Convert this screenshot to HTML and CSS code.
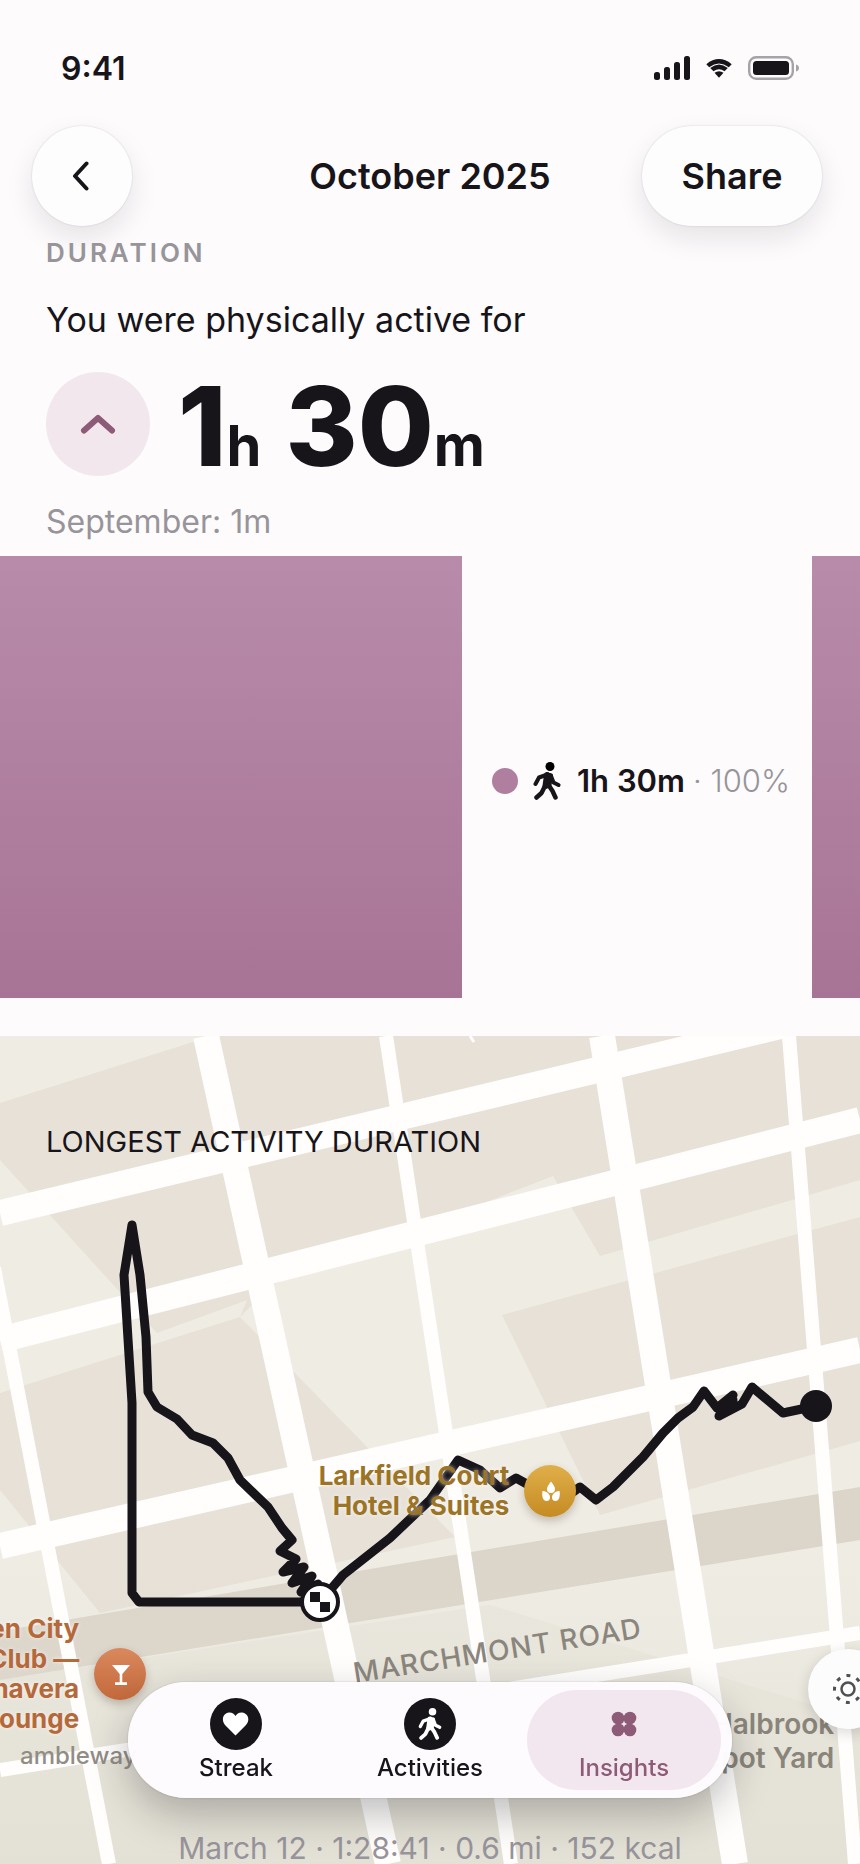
FILE: index.html
```html
<!DOCTYPE html>
<html lang="en">
<head>
<meta charset="utf-8">
<meta name="viewport" content="width=device-width, initial-scale=1">
<title>October 2025</title>
<link rel="stylesheet" href="styles.css">
</head>
<body>
<svg class="defs" aria-hidden="true">
  <symbol id="walker" viewBox="0 0 28 38">
    <circle cx="17" cy="4.500" r="4.500"/>
    <path d="M14 13 L12.500 24 M17 14 L15.500 23" stroke="currentColor" stroke-width="6" stroke-linecap="round" stroke-linejoin="round"/>
    <path d="M14.500 12.500 L6 15.500 L2.500 22 M18 14 L20.500 20.500 L25.500 23" fill="none" stroke="currentColor" stroke-width="4" stroke-linecap="round" stroke-linejoin="round"/>
    <path d="M12 24 L8.500 31 L3.500 35.500 M15.500 23 L19.500 29 L22.500 35.500" fill="none" stroke="currentColor" stroke-width="4.500" stroke-linecap="round" stroke-linejoin="round"/>
  </symbol>
</svg>
<main class="page">
  <div class="status">
    <time class="status-time">9:41</time>
    <div class="status-icons">
      <svg width="36" height="24" viewBox="0 0 36 24" aria-label="Signal"><rect y="16" width="6" height="8" rx="2.500"/><rect x="10" y="11" width="6" height="13" rx="2.500"/><rect x="20" y="6" width="6" height="18" rx="2.500"/><rect x="30" width="6" height="24" rx="2.500"/></svg>
      <svg width="26" height="19" viewBox="0 0 26 19" aria-label="Wi-Fi"><path d="M0.300 5.200 Q13 -5 25.700 5.200 L22.800 8.200 Q13 0.800 3.200 8.200Z"/><path d="M4.200 9 Q13 2 21.800 9 L18.500 12.300 Q13 8 7.500 12.300Z"/><path d="M8.500 13.700 Q13 10.700 17.500 13.700 L13 18.700Z"/></svg>
      <svg width="51" height="24" viewBox="0 0 51 24" aria-label="Battery"><rect x="1.200" y="1.200" width="43.600" height="21.600" rx="7" fill="none" stroke="#a5a3a7" stroke-width="2.400"/><rect x="5" y="5" width="36" height="14" rx="3.500"/><path d="M48 8.500 Q51 9.500 51 12 Q51 14.500 48 15.500Z" fill="#a5a3a7"/></svg>
    </div>
  </div>

  <header class="nav">
    <button class="glass back" aria-label="Back"><svg width="20" height="30" viewBox="0 0 20 30"><path d="M14.500 2.500 L3 15 L14.500 27.500" fill="none" stroke="#17141a" stroke-width="4" stroke-linecap="round" stroke-linejoin="round"/></svg></button>
    <h1 class="nav-title">October 2025</h1>
    <button class="glass share">Share</button>
  </header>

  <section class="summary">
    <h2 class="eyebrow">DURATION</h2>
    <p class="lead">You were physically active for</p>
    <div class="metric">
      <span class="trend"><svg width="36" height="22" viewBox="0 0 36 22" aria-label="Up"><path d="M4 17.500 L18 5 L32 17.500" fill="none" stroke="#8d5a77" stroke-width="6" stroke-linecap="round" stroke-linejoin="round"/></svg></span>
      <p class="value">1<span class="unit">h</span> 30<span class="unit">m</span></p>
    </div>
    <p class="previous">September: 1m</p>
  </section>

  <section class="chart" aria-label="Share by activity">
    <div class="bar"></div>
    <div class="legend">
      <span class="dot"></span>
      <svg class="walk" width="28" height="38" aria-label="Walking"><use href="#walker"/></svg>
      <strong class="legend-value">1h 30m</strong>
      <span class="legend-share">· 100%</span>
    </div>
    <div class="bar"></div>
  </section>

  <section class="map">
    <svg class="map-canvas" viewBox="0 1036 860 828" preserveAspectRatio="xMidYMin slice" aria-hidden="true">
      <defs><linearGradient id="fade" x1="0" y1="0" x2="0" y2="1"><stop offset="0" stop-color="#dfddd0" stop-opacity="0"/><stop offset="1" stop-color="#dfddd0" stop-opacity=".6"/></linearGradient></defs>
      <rect y="1036" width="860" height="828" fill="#e7e1d8"/>
      <g fill="#efece4">
        <path d="M0 1036 H212 L0 1103Z"/>
        <path d="M0 1160 L157 1333 L247 1300 L240 1317 L0 1393Z"/>
        <path d="M240 1317 L272 1285 L553 1176 L600 1256 L860 1180 V1217 L502 1315 L600 1515 L860 1441 V1864 H0 V1490 L100 1613 L455 1537Z"/>
      </g>
      <path d="M490 1605 L860 1720 V1864 H0 V1680Z" fill="#e5e1d8" opacity=".5"/>
      <path d="M0 1631 L860 1487 V1540 L0 1680Z" fill="#dcd5ca"/>
      <rect y="1560" width="860" height="304" fill="url(#fade)"/>
      <g stroke="#fffefd" stroke-width="26">
        <path d="M206 1036 L388 1864"/><path d="M602 1036 L735 1864"/>
        <path d="M0 1213 L860 1007"/><path d="M0 1340 L860 1120"/><path d="M0 1546 L860 1350"/>
      </g>
      <g stroke="#fffefd" stroke-width="14">
        <path d="M-6 1268 L109 1864"/><path d="M386 1036 L511 1864"/><path d="M789 1036 L855 1864"/><path d="M0 1770 L860 1633"/>
      </g>
      <path d="M470 1036 L474 1042" stroke="#fffefd" stroke-width="3"/>
      <g fill="none" stroke="#17141a" stroke-width="9" stroke-linecap="round" stroke-linejoin="round">
        <path d="M320 1602 H139 L132 1593 V1403 L124 1275 L132 1225 L140 1275 L146 1337 L148 1392 L157 1407 L177 1419 L192 1435 L213 1443 L228 1458 L240 1480 L268 1507 L282 1528 L292 1540 L280 1551 L296 1559 L283 1572 L304 1567 L292 1583 L312 1576 L301 1592 L318 1584"/>
        <path d="M320 1602 L343 1575 L390 1538 L430 1500 L458 1460 L480 1470 L500 1488 L516 1478 L534 1488 L573 1492 L580 1487 L596 1500 L613 1487 L643 1457 L663 1433 L678 1418 L693 1407 L704 1391 L717 1408 L733 1395 L719 1416 L742 1404 L752 1387 L783 1413 L816 1406"/>
        <path d="M721 1410 L733 1400"/>
      </g>
      <circle cx="816" cy="1406" r="16" fill="#17141a"/>
      <circle cx="320" cy="1602" r="18" fill="#fff" stroke="#17141a" stroke-width="4"/>
      <path d="M310 1592 h10 v20 h10 v-10 h-20z" fill="#17141a"/>
      <text class="road-name" transform="translate(355 1683) rotate(-9)">MARCHMONT ROAD</text>
    </svg>
    <h2 class="map-title">LONGEST ACTIVITY DURATION</h2>

    <div class="place hotel"><span class="place-name">Larkfield Court<br>Hotel &amp; Suites</span>
      <svg class="pin" width="52" height="52" viewBox="0 0 52 52" aria-hidden="true"><g fill="#fff"><path d="M27 16.500 C29.500 20 31 22 31 24 A4 4 0 0 1 23 24 C23 22 24.500 20 27 16.500Z"/><path d="M18.500 26 C22 26 26 28.500 26 32.500 C26 35 24.500 36 22.500 36 C19 36 17.500 31 18.500 26Z"/><path d="M35.500 26 C32 26 28 28.500 28 32.500 C28 35 29.500 36 31.500 36 C35 36 36.500 31 35.500 26Z"/></g></svg>
    </div>
    <div class="place lounge"><span class="place-name">Garden City<br>Club —<br>Primavera<br>Lounge</span>
      <svg class="pin" width="52" height="52" viewBox="0 0 52 52" aria-hidden="true"><path fill="#fff" d="M18 17 H36 L28.300 26 V34.300 H33 V37 H21 V34.300 H25.700 V26Z"/></svg>
    </div>
    <span class="street">ambleway</span>
    <span class="yard">Halbrook<br>Depot Yard</span>
    <button class="map-settings" aria-label="Map settings"><svg width="34" height="34" viewBox="0 0 34 34"><circle cx="17" cy="17" r="6.500" fill="none" stroke="#514f54" stroke-width="2.500"/><circle cx="17" cy="17" r="13.500" fill="none" stroke="#514f54" stroke-width="3" stroke-dasharray="4 6.603" stroke-dashoffset="2"/></svg></button>
    <p class="caption">March 12 · 1:28:41 · 0.6 mi · 152 kcal</p>
  </section>
</main>

<nav class="tabs" aria-label="Main">
  <a class="tab" href="#streak"><span class="tab-icon filled"><svg width="28" height="26" viewBox="0 0 28 26"><path fill="#fff" d="M13.500 24.500 L3 14 C-1 9 1 2 7 1.500 C10 1.300 12.500 3 13.500 5 C14.500 3 17 1.300 20 1.500 C26 2 28.500 9 24 14Z"/></svg></span>Streak</a>
  <a class="tab" href="#activities"><span class="tab-icon filled"><svg class="walk-light" width="24" height="32"><use href="#walker"/></svg></span>Activities</a>
  <a class="tab active" href="#insights" aria-current="page"><span class="tab-icon"><svg width="26" height="26" viewBox="0 0 26 26" fill="#8d5a77"><circle cx="7" cy="7" r="6.300"/><circle cx="19" cy="7" r="6.300"/><circle cx="7" cy="19" r="6.300"/><circle cx="19" cy="19" r="6.300"/><path fill-rule="evenodd" d="M8 8 H18 V18 H8Z M13 9.500 L12 12 L9.500 13 L12 14 L13 16.500 L14 14 L16.500 13 L14 12Z"/></svg></span>Insights</a>
</nav>
</body>
</html>
```

FILE: styles.css
```css
* { box-sizing: border-box; }
body {
  margin: 0;
  background: #fdfbfc;
  color: #17141a;
  font-family: Inter, "Liberation Sans", sans-serif;
}
h1, h2, p { margin: 0; }
button { border: 0; padding: 0; font: inherit; color: inherit; cursor: pointer; }
svg { display: block; }
.defs { position: absolute; width: 0; height: 0; }
.page { overflow: hidden; }

.status {
  display: flex;
  justify-content: space-between;
  align-items: center;
  padding: 48px 61px 0;
}
.status-time { padding-top: 2px; font-size: 32px; line-height: 38px; font-weight: 600; }
.status-icons { display: flex; align-items: center; gap: 16px; fill: #17141a; }

.nav {
  display: grid;
  grid-template-columns: 1fr auto 1fr;
  align-items: center;
  padding: 38px 32px 0;
}
.glass {
  height: 100px;
  border-radius: 50px;
  background: #fefdfe;
  box-shadow: 0 0 2px rgba(23, 20, 26, .16), 0 12px 28px rgba(23, 20, 26, .1);
  display: flex;
  align-items: center;
  justify-content: center;
}
.back { width: 100px; }
.share { width: 180px; justify-self: end; margin-right: 6px; font-size: 36px; font-weight: 600; }
.nav-title { font-size: 36px; line-height: 44px; font-weight: 600; }

.summary { padding: 11px 46px 14px; }
.eyebrow { color: #97949a; font-size: 26px; line-height: 32px; font-weight: 600; letter-spacing: 3px; }
.lead { margin-top: 29px; font-size: 34px; line-height: 44px; }
.metric { display: flex; align-items: center; gap: 28px; margin-top: 30px; }
.trend {
  flex: none;
  width: 104px;
  height: 104px;
  border-radius: 50%;
  background: #f2e7ed;
  display: flex;
  align-items: center;
  justify-content: center;
}
.value { padding-top: 4px; font-size: 110px; line-height: 100px; font-weight: 800; white-space: nowrap; }
.unit { font-size: 56px; line-height: 56px; font-weight: 700; }
.previous { margin-top: 26px; color: #97949a; font-size: 32px; line-height: 40px; }

.chart { display: grid; grid-template-columns: 1fr 350px 48px; height: 442px; }
.bar { background: linear-gradient(#b88bab, #a87495); }
.legend {
  display: flex;
  align-items: center;
  padding: 8px 22px 0 30px;
  font-size: 31px;
  line-height: 40px;
  white-space: nowrap;
}
.dot { width: 26px; height: 26px; border-radius: 50%; background: #b07f9f; }
.walk { margin: 0 16px 0 15px; color: #17141a; }
.legend-value { font-weight: 600; }
.legend-share { margin-left: auto; color: #97949a; font-weight: 300; }

.map {
  position: relative;
  display: flex;
  flex-direction: column;
  justify-content: space-between;
  aspect-ratio: 860 / 828;
  margin-top: 38px;
  padding-top: 86px;
  overflow: hidden;
}
.map-canvas { position: absolute; inset: 0; width: 100%; height: 100%; }
.road-name { font-size: 28px; font-weight: 500; letter-spacing: 1px; fill: #8b867d; }
.map-title { position: relative; padding: 0 46px; font-size: 29px; line-height: 40px; font-weight: 400; }
.caption { position: relative; color: #98949b; font-size: 30px; line-height: 32px; text-align: center; }

.place {
  position: absolute;
  display: flex;
  align-items: center;
  justify-content: flex-end;
  gap: 15px;
  font-size: 26px;
  line-height: 30px;
  font-weight: 700;
  text-align: right;
  white-space: nowrap;
  transform: translateY(-50%);
}
.place-name { text-shadow: 0 0 4px rgba(255, 255, 255, .7); }
.pin { flex: none; border-radius: 50%; box-shadow: 0 4px 8px rgba(60, 40, 20, .25); }
.hotel { right: 33%; top: 55%; color: #9b7426; }
.hotel .pin { background: linear-gradient(#e0af4a, #c58b23); }
.lounge { right: 83%; top: 77%; color: #b5693b; }
.lounge .pin { background: linear-gradient(#d9885d, #c4693c); }
.street { position: absolute; left: 20px; top: 85%; color: #918d86; font-size: 24px; line-height: 32px; font-weight: 500; }
.yard {
  position: absolute;
  right: 3%;
  top: 81%;
  color: #8a857b;
  font-size: 28px;
  line-height: 34px;
  font-weight: 600;
  text-align: right;
}
.map-settings {
  position: absolute;
  left: 94%;
  top: 74%;
  width: 80px;
  height: 80px;
  border-radius: 50%;
  background: #fdfcfc;
  box-shadow: 0 4px 14px rgba(23, 20, 26, .16);
  display: flex;
  align-items: center;
  justify-content: center;
}

.tabs {
  position: fixed;
  left: 0;
  right: 0;
  bottom: 66px;
  width: fit-content;
  margin: 0 auto;
  display: flex;
  padding: 8px 11px;
  border-radius: 58px;
  background: rgba(253, 251, 253, .98);
  box-shadow: 0 0 2px rgba(23, 20, 26, .2), 0 16px 40px rgba(23, 20, 26, .28);
}
.tab {
  width: 194px;
  height: 100px;
  border-radius: 50px;
  display: flex;
  flex-direction: column;
  align-items: center;
  gap: 4px;
  padding-top: 8px;
  color: #17141a;
  font-size: 24px;
  line-height: 28px;
  font-weight: 500;
  text-decoration: none;
}
.tab.active { background: #f2e7ee; color: #8d5a77; }
.tab-icon { width: 52px; height: 52px; display: flex; align-items: center; justify-content: center; border-radius: 50%; }
.filled { background: #17141a; }
.walk-light { color: #fff; fill: #fff; }
```
